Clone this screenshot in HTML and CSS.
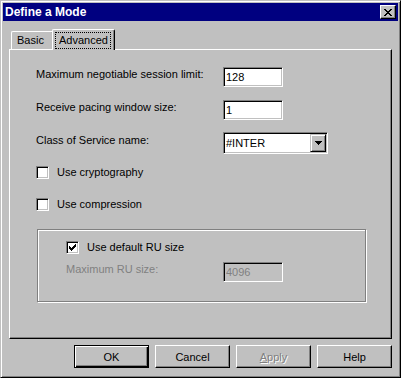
FILE: index.html
```html
<!DOCTYPE html>
<html lang="en">
<head>
    <meta charset="UTF-8">
    <title>Define a Mode</title>
    <link rel="stylesheet" href="styles.css">
</head>
<body>
    <div class="window">
        <div class="titlebar">
            <span class="title">Define a Mode</span>
            <button class="close-btn" aria-label="Close">
                <svg width="8" height="7" viewBox="0 0 8 7" shape-rendering="crispEdges">
                    <path d="M0 0h2v1H0zM6 0h2v1H6zM1 1h2v1H1zM5 1h2v1H5zM2 2h4v1H2zM3 3h2v1H3zM2 4h4v1H2zM1 5h2v1H1zM5 5h2v1H5zM0 6h2v1H0zM6 6h2v1H6z" fill="#000"/>
                </svg>
            </button>
        </div>

        <div class="tabs">
            <div class="tab">Basic</div>
            <div class="tab active"><span class="focus">Advanced</span></div>
        </div>

        <div class="panel">
            <div class="fields">
                <label for="session-limit">Maximum negotiable session limit:</label>
                <input type="text" id="session-limit" class="edit" value="128">

                <label for="pacing">Receive pacing window size:</label>
                <input type="text" id="pacing" class="edit" value="1">

                <label>Class of Service name:</label>
                <div class="combo">
                    <span class="combo-text">#INTER</span>
                    <span class="combo-btn">
                        <svg width="7" height="4" viewBox="0 0 7 4" shape-rendering="crispEdges">
                            <path d="M0 0h7v1H0zM1 1h5v1H1zM2 2h3v1H2zM3 3h1v1H3z" fill="#000"/>
                        </svg>
                    </span>
                </div>
            </div>

            <div class="check first">
                <span class="box"></span>
                <span>Use cryptography</span>
            </div>
            <div class="check second">
                <span class="box"></span>
                <span>Use compression</span>
            </div>

            <div class="group">
                <div class="check">
                    <span class="box">
                        <svg width="7" height="7" viewBox="0 0 7 7" shape-rendering="crispEdges">
                            <path d="M6 0h1v3H6zM5 1h1v3H5zM4 2h1v3H4zM3 3h1v3H3zM2 4h1v3H2zM1 3h1v3H1zM0 2h1v3H0z" fill="#000"/>
                        </svg>
                    </span>
                    <span>Use default RU size</span>
                </div>
                <div class="ru-row">
                    <label class="disabled">Maximum RU size:</label>
                    <input type="text" class="edit" value="4096" disabled>
                </div>
            </div>
        </div>

        <div class="buttons">
            <button class="btn default">OK</button>
            <button class="btn">Cancel</button>
            <button class="btn disabled-btn"><u>A</u>pply</button>
            <button class="btn">Help</button>
        </div>
    </div>
</body>
</html>
```

FILE: styles.css
```css
body {
    margin: 0;
    background-color: #c0c0c0;
    font-family: "Liberation Sans", Arial, sans-serif;
    font-size: 11px;
    color: #000;
}
.window {
    box-sizing: border-box;
    width: 401px;
    height: 378px;
    padding: 2px;
    border: 1px solid;
    border-color: #c0c0c0 #000 #000 #c0c0c0;
    box-shadow: inset 1px 1px #fff, inset -1px -1px #808080;
    display: flex;
    flex-direction: column;
}
.titlebar {
    height: 18px;
    background-color: #000080;
    color: #fff;
    display: flex;
    align-items: center;
    justify-content: space-between;
    padding: 0 2px 0 2px;
}
.title {
    font-size: 12px;
    font-weight: bold;
}
.close-btn {
    box-sizing: border-box;
    width: 16px;
    height: 14px;
    padding: 0;
    border: 1px solid;
    border-color: #fff #000 #000 #fff;
    box-shadow: inset -1px -1px #808080;
    background-color: #c0c0c0;
    display: flex;
    align-items: center;
    justify-content: center;
}
.tabs {
    display: flex;
    align-items: flex-end;
    height: 20px;
    margin: 8px 0 0 8px;
}
.tab {
    box-sizing: border-box;
    height: 18px;
    width: 43px;
    padding: 2px 0 0 5px;
    line-height: 13px;
    border-top: 1px solid #fff;
    border-left: 1px solid #fff;
    border-right: 1px solid #000;
    border-radius: 2px 2px 0 0;
    box-shadow: inset -1px 0 #808080;
}
.tab.active {
    position: relative;
    z-index: 1;
    width: 63px;
    height: 21px;
    margin-left: -2px;
    margin-bottom: -1px;
    padding: 2px 0 0 2px;
    background-color: #c0c0c0;
}
.focus {
    display: inline-block;
    padding: 1px 2px 1px 3px;
    border: 1px dotted #000;
}
.panel {
    box-sizing: border-box;
    height: 290px;
    margin: 0 6px;
    padding: 17px 0 0 26px;
    border: 1px solid;
    border-color: #fff #000 #000 #fff;
    box-shadow: inset -1px -1px #808080;
}
.fields {
    display: grid;
    grid-template-columns: 187px auto;
    row-gap: 13px;
    align-items: start;
}
.fields label {
    padding-top: 1px;
    line-height: 13px;
}
.edit {
    box-sizing: border-box;
    width: 60px;
    height: 20px;
    margin: 0;
    padding: 0 2px;
    font-family: inherit;
    font-size: 11px;
    color: #000;
    background-color: #fff;
    border: 1px solid;
    border-color: #808080 #fff #fff #808080;
    box-shadow: inset 1px 1px #000, inset -1px -1px #c0c0c0;
    outline: none;
}
.edit:disabled {
    background-color: #c0c0c0;
    color: #808080;
}
.combo {
    box-sizing: border-box;
    width: 105px;
    height: 22px;
    margin-top: -1px;
    padding: 1px;
    display: flex;
    align-items: center;
    background-color: #fff;
    border: 1px solid;
    border-color: #808080 #fff #fff #808080;
    box-shadow: inset 1px 1px #000, inset -1px -1px #c0c0c0;
}
.combo-text {
    padding-left: 1px;
}
.combo-btn {
    box-sizing: border-box;
    width: 16px;
    height: 18px;
    margin-left: auto;
    display: flex;
    align-items: center;
    justify-content: center;
    background-color: #c0c0c0;
    border: 1px solid;
    border-color: #c0c0c0 #000 #000 #c0c0c0;
    box-shadow: inset 1px 1px #fff, inset -1px -1px #808080;
}
.check {
    display: flex;
    align-items: center;
    gap: 8px;
    height: 13px;
    line-height: 13px;
}
.check.first {
    margin-top: 12px;
}
.check.second {
    margin-top: 19px;
}
.box {
    box-sizing: border-box;
    width: 13px;
    height: 13px;
    flex: none;
    display: flex;
    align-items: center;
    justify-content: center;
    background-color: #fff;
    border: 1px solid;
    border-color: #808080 #fff #fff #808080;
    box-shadow: inset 1px 1px #000, inset -1px -1px #c0c0c0;
}
.group {
    box-sizing: border-box;
    width: 329px;
    height: 73px;
    margin: 18px 0 0 1px;
    padding: 11px 0 0 28px;
    border: 1px solid #808080;
    box-shadow: inset 1px 1px #fff, 1px 1px #fff;
}
.ru-row {
    display: flex;
    align-items: flex-start;
    margin-top: 8px;
}
.ru-row label {
    width: 157px;
    padding-top: 1px;
    line-height: 13px;
}
.disabled {
    color: #808080;
}
.buttons {
    display: flex;
    justify-content: flex-end;
    gap: 6px;
    margin-top: 6px;
    padding-right: 6px;
}
.btn {
    box-sizing: border-box;
    width: 75px;
    height: 23px;
    padding: 0;
    font-family: inherit;
    font-size: 11px;
    color: #000;
    background-color: #c0c0c0;
    border: 1px solid;
    border-color: #fff #000 #000 #fff;
    box-shadow: inset -1px -1px #808080;
}
.btn.default {
    border-color: #000;
    box-shadow: inset 1px 1px #fff, inset -1px -1px #000, inset -2px -2px #808080;
}
.btn.disabled-btn {
    color: #808080;
    text-shadow: 1px 1px #fff;
}
```
